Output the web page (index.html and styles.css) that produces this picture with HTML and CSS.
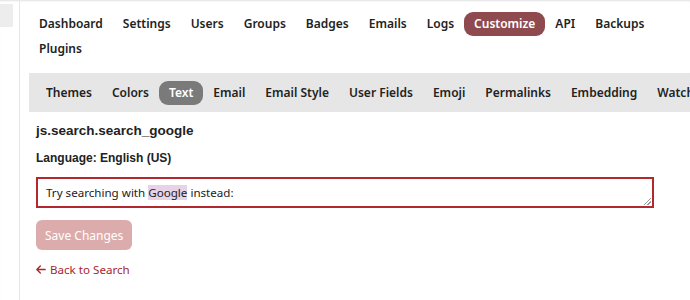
FILE: index.html
```html
<!DOCTYPE html>
<html lang="en">
<head>
  <meta charset="UTF-8" />
  <title>Admin - Customize Text</title>
  <link rel="stylesheet" href="styles.css">
</head>
<body>
  <div class="page">
    <!-- sidebar edge -->
    <aside class="sidebar">
      <div class="sidebar-block"></div>
    </aside>

    <main class="admin">
      <nav class="main-nav">
        <a href="#">Dashboard</a>
        <a href="#">Settings</a>
        <a href="#">Users</a>
        <a href="#">Groups</a>
        <a href="#">Badges</a>
        <a href="#">Emails</a>
        <a href="#">Logs</a>
        <a href="#" class="active">Customize</a>
        <a href="#">API</a>
        <a href="#">Backups</a>
        <a href="#">Plugins</a>
      </nav>

      <nav class="sub-nav">
        <a href="#">Themes</a>
        <a href="#">Colors</a>
        <a href="#" class="active">Text</a>
        <a href="#">Email</a>
        <a href="#">Email Style</a>
        <a href="#">User Fields</a>
        <a href="#">Emoji</a>
        <a href="#">Permalinks</a>
        <a href="#">Embedding</a>
        <a href="#">Watched Words</a>
      </nav>

      <div class="edit-text">
        <h3>js.search.search_google</h3>
        <div class="language">Language: English (US)</div>
        <div class="text-box">Try searching with <span class="mark">Google</span> instead:<span class="grip"></span></div>
        <button class="save" disabled>Save Changes</button>
        <a href="#" class="back">
          <svg class="arrow" viewBox="0 0 448 512" width="10" height="11"><path fill="currentColor" d="M9.4 233.4c-12.5 12.5-12.5 32.8 0 45.3l160 160c12.5 12.5 32.8 12.5 45.3 0s12.5-32.8 0-45.3L109.2 288H416c17.7 0 32-14.3 32-32s-14.3-32-32-32H109.3L214.6 118.6c12.5-12.5 12.5-32.8 0-45.3s-32.8-12.5-45.3 0l-160 160z"/></svg>
          Back to Search
        </a>
      </div>
    </main>
  </div>
</body>
</html>
```

FILE: styles.css
```css
body {
  margin: 0;
  font-family: "Noto Sans", "Open Sans", sans-serif;
  color: #222;
  background: #fff;
  overflow: hidden;
}

a {
  text-decoration: none;
  color: inherit;
}

.page {
  display: flex;
  min-height: 300px;
  box-shadow: inset 0 2px 2px -1px rgba(0,0,0,0.12);
}

.sidebar {
  width: 19px;
  flex-shrink: 0;
  border-right: 1px solid #e6e6e6;
  padding-top: 4px;
}

.sidebar-block {
  width: 13px;
  height: 23px;
  background: #ededed;
}

.admin {
  flex: 1;
  min-width: 0;
  padding-left: 9px;
}

.main-nav {
  display: flex;
  flex-wrap: wrap;
  padding: 12px 30px 0 0;
  row-gap: 1px;
}

.main-nav a,
.sub-nav a {
  font-size: 12px;
  font-weight: 600;
  line-height: 24px;
  padding: 0 10px;
  border-radius: 9px;
}

.main-nav a.active {
  background: #8e4a4f;
  color: #fff;
}

.sub-nav {
  display: flex;
  flex-wrap: nowrap;
  white-space: nowrap;
  overflow: hidden;
  margin-top: 12px;
  padding: 8px 7px 7px;
  background: #e6e6e6;
}

.sub-nav a.active {
  background: #7a7a7a;
  color: #fff;
  border-radius: 9px;
}

.edit-text {
  padding: 10px 36px 0 7px;
}

.edit-text h3 {
  margin: 0;
  font-family: "Liberation Sans", Arial, sans-serif;
  font-size: 13.5px;
  font-weight: 700;
  line-height: 18px;
}

.language {
  margin-top: 11px;
  font-family: "Liberation Sans", Arial, sans-serif;
  font-size: 12px;
  font-weight: 700;
}

.text-box {
  position: relative;
  margin-top: 12px;
  height: 27px;
  border: 2px solid #b3282e;
  padding: 0 8px;
  font-size: 11.6px;
  line-height: 27px;
  color: #222;
}

.mark {
  background: #e6d3e8;
}

.grip {
  position: absolute;
  right: 1px;
  bottom: 1px;
  width: 7px;
  height: 7px;
  background: linear-gradient(135deg, transparent 45%, #999 45%, #999 55%, transparent 55%, transparent 70%, #999 70%, #999 80%, transparent 80%);
}

.save {
  display: block;
  margin-top: 12px;
  padding: 0 9px;
  height: 30px;
  border: none;
  border-radius: 6px;
  background: #dcacac;
  color: #fff;
  font-family: "Noto Sans", "Open Sans", sans-serif;
  font-size: 12px;
}

.back {
  display: inline-flex;
  align-items: center;
  gap: 4px;
  margin-top: 12px;
  font-size: 11.6px;
  color: #a8262c;
}
```
